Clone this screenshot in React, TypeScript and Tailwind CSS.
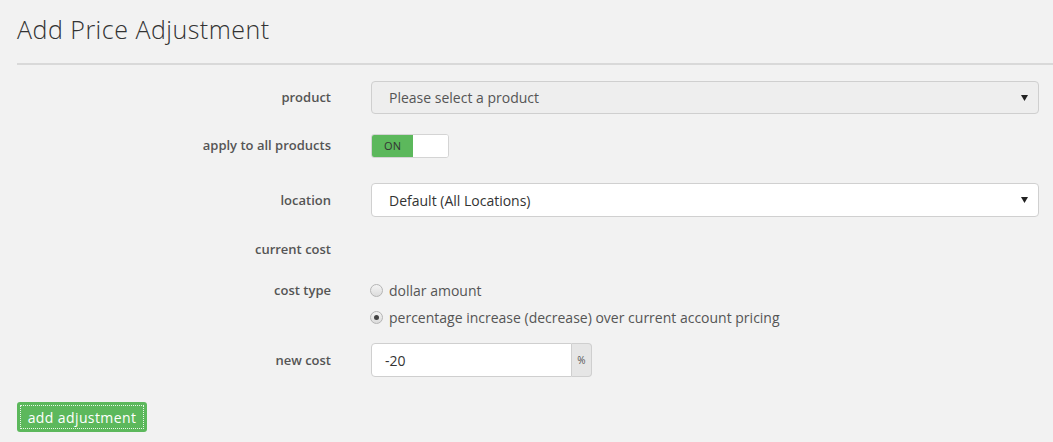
import React from "react";

function Caret() {
  return (
    <svg width="7" height="6" viewBox="0 0 7 6" className="shrink-0">
      <path d="M0 0 L7 0 L3.5 6 Z" fill="#222" />
    </svg>
  );
}

function Radio(props: any) {
  return (
    <div className="flex items-center h-[27px]">
      <span className="w-[13px] h-[13px] rounded-full border border-[#b5b5b5] bg-gradient-to-b from-[#f4f4f4] to-[#dcdcdc] flex items-center justify-center">
        {props.checked ? (
          <span className="w-[5px] h-[5px] rounded-full bg-[#444]" />
        ) : null}
      </span>
      <span className="ml-[6px] text-[14px] text-[#555]">{props.text}</span>
    </div>
  );
}

export default function App() {
  return (
    <div
      className="w-[1053px] h-[442px] bg-[#f2f2f2] overflow-hidden"
      style={{ fontFamily: '"Open Sans", "Liberation Sans", sans-serif' }}
    >
      <div className="pl-[17px] pt-[12px]">
        <h1 className="text-[25px] font-light text-[#333] leading-[34px] tracking-[0.5px]">
          Add Price Adjustment
        </h1>
        <div className="mt-[17px] h-[2px] bg-[#d9d9d9]" />
      </div>

      <div className="pt-[16px]">
        <div className="flex items-center h-[33px]">
          <div className="w-[331px] text-right text-[13px] font-semibold text-[#555]">product</div>
          <div className="ml-[40px] w-[668px] h-[33px] rounded-[4px] border border-[#cfcfcf] bg-[#eeeeee] flex items-center justify-between pl-[17px] pr-[10px]">
            <span className="text-[14px] text-[#555]">Please select a product</span>
            <Caret />
          </div>
        </div>

        <div className="flex items-center h-[24px] mt-[20px]">
          <div className="w-[331px] text-right text-[13px] font-semibold text-[#555]">apply to all products</div>
          <div className="ml-[40px] w-[78px] h-[24px] rounded-[3px] border border-[#d4d4d4] flex overflow-hidden bg-white">
            <div className="w-[41px] bg-[#5cb85c] flex items-center justify-center text-[11px] text-[#333]">ON</div>
            <div className="flex-1 bg-white" />
          </div>
        </div>

        <div className="flex items-center h-[34px] mt-[25px]">
          <div className="w-[331px] text-right text-[13px] font-semibold text-[#555] pt-[1px]">location</div>
          <div className="ml-[40px] w-[668px] h-[34px] rounded-[4px] border border-[#d0d0d0] bg-white flex items-center justify-between pl-[17px] pr-[10px]">
            <span className="text-[14px] text-[#333]">Default (All Locations)</span>
            <Caret />
          </div>
        </div>

        <div className="flex items-center h-[20px] mt-[23px]">
          <div className="w-[331px] text-right text-[13px] font-semibold text-[#555]">current cost</div>
        </div>

        <div className="flex items-start mt-[17px]">
          <div className="w-[331px] text-right text-[13px] font-semibold text-[#555] leading-[27px]">cost type</div>
          <div className="ml-[39px] flex flex-col">
            <Radio text="dollar amount" />
            <Radio text="percentage increase (decrease) over current account pricing" checked />
          </div>
        </div>

        <div className="flex items-center h-[34px] mt-[12px]">
          <div className="w-[331px] text-right text-[13px] font-semibold text-[#555] pt-[1px]">new cost</div>
          <div className="ml-[40px] w-[221px] h-[34px] flex">
            <div className="flex-1 h-full rounded-l-[4px] border border-[#cfcfcf] bg-white flex items-center pl-[13px] text-[14px] text-[#333]">
              -20
            </div>
            <div className="w-[20px] h-full rounded-r-[4px] border border-l-0 border-[#cfcfcf] bg-[#e6e6e6] flex items-center justify-center text-[10px] text-[#555]">
              %
            </div>
          </div>
        </div>

        <div className="pl-[17px] mt-[25px]">
          <button className="w-[130px] h-[30px] rounded-[3px] bg-[#5cb85c] p-[3px] text-white">
            <span className="flex items-center justify-center w-full h-full border border-dotted border-[#e8f5e8] text-[14px] font-medium tracking-[0.4px]">
              add adjustment
            </span>
          </button>
        </div>
      </div>
    </div>
  );
}
